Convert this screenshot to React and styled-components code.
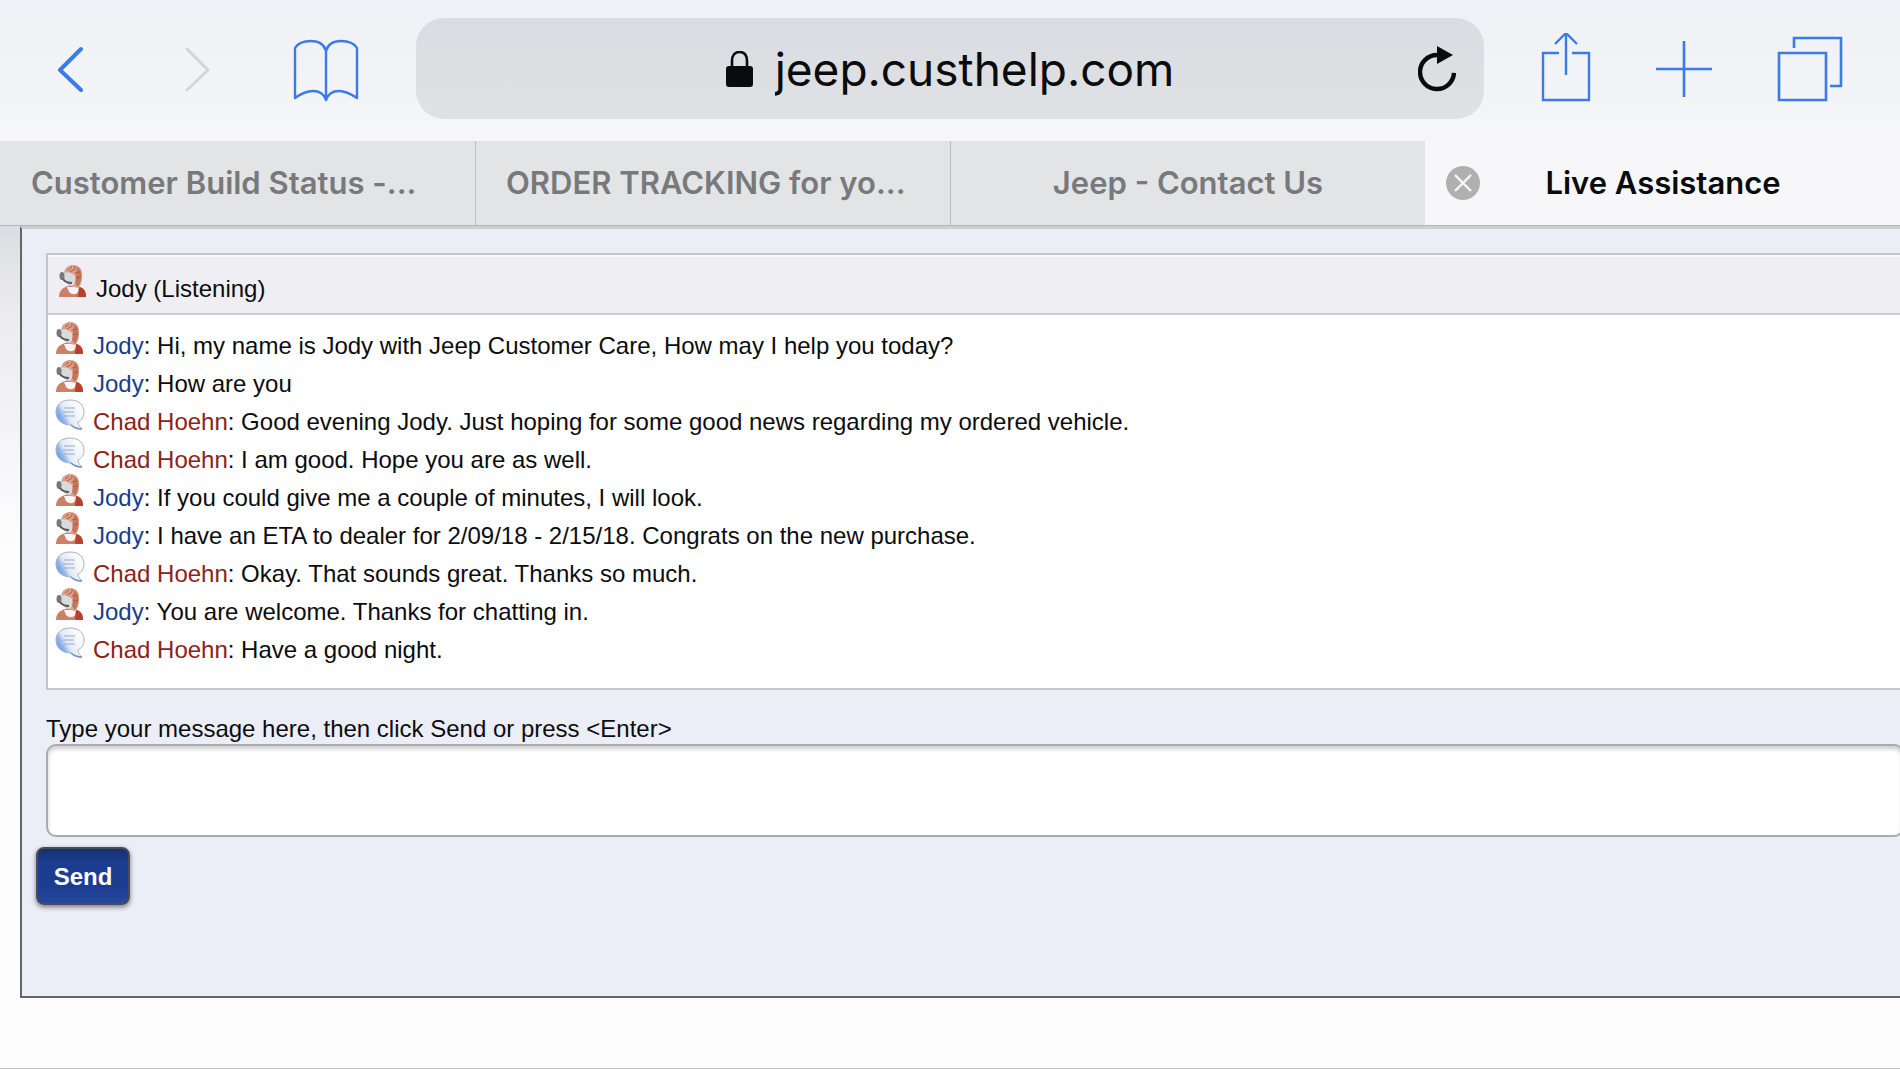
import React, { useState } from "react";
import styled, { createGlobalStyle } from "styled-components";

const GlobalStyle = createGlobalStyle`
  * {
    box-sizing: border-box;
  }
  body {
    margin: 0;
    overflow-x: hidden;
    background: #fdfdfe;
  }
`;

const Browser = styled.div`
  min-height: 100vh;
  display: flex;
  flex-direction: column;
  overflow: hidden;
  border-bottom: 1px solid #c3c4c6;
`;

const Toolbar = styled.header`
  display: flex;
  align-items: center;
  gap: 57px;
  padding: 18px 57px 22px 37px;
  background: linear-gradient(to bottom, #eff1f6 0%, #f1f3f6 50%, #f6f6f8 100%);
`;

const NavGroup = styled.nav`
  display: flex;
  align-items: center;
  gap: ${({ $gap }) => $gap};
`;

const IconButton = styled.button`
  display: flex;
  justify-content: center;
  align-items: center;
  width: ${({ $width }) => $width || "66px"};
  height: 72px;
  padding: 0;
  border: none;
  background: none;
  color: ${({ disabled }) => (disabled ? "#d3d5d8" : "#3b7be8")};
  cursor: pointer;
`;

const AddressBar = styled.div`
  flex: 1;
  display: grid;
  grid-template-columns: 1fr auto 1fr;
  align-items: center;
  height: 101px;
  padding: 0 28px;
  border-radius: 28px;
  background: linear-gradient(to bottom, #d9dce1, #e0e1e4);
`;

const Address = styled.div`
  grid-column: 2;
  display: flex;
  align-items: center;
  gap: 22px;
`;

const AddressInput = styled.input`
  field-sizing: content;
  height: 60px;
  padding: 0;
  border: none;
  outline: none;
  background: none;
  color: #0a0b0d;
  font-family: Inter, sans-serif;
  font-size: 46px;
`;

const ReloadButton = styled(IconButton)`
  justify-self: end;
  color: #0a0b0d;
`;

const TabStrip = styled.div`
  display: grid;
  grid-template-columns: repeat(4, 1fr);
  height: 85px;
  border-bottom: 1px solid #b5b7ba;
  background: #e3e4e6;
`;

const Tab = styled.div`
  min-width: 0;
  display: grid;
  grid-template-columns: ${({ $active }) => ($active ? "34px 1fr 34px" : "1fr")};
  align-items: center;
  padding: 0 ${({ $active }) => ($active ? "20px" : "30px")};
  border-left: 1px solid ${({ $active }) => ($active ? "#f7f7f9" : "#bcbec1")};
  background: ${({ $active }) => ($active ? "#f7f7f9" : "none")};

  &:first-child {
    border-left-color: transparent;
  }
`;

const TabTitle = styled.button`
  padding: 0;
  border: none;
  background: none;
  overflow: hidden;
  white-space: nowrap;
  text-align: ${({ $cut }) => ($cut ? "left" : "center")};
  color: ${({ $active }) => ($active ? "#0a0b0d" : "#77797c")};
  font-family: Inter, sans-serif;
  font-size: 31px;
  font-weight: 600;
  line-height: 40px;
  cursor: pointer;
`;

const CloseButton = styled.button`
  display: flex;
  width: 34px;
  height: 34px;
  padding: 0;
  border: none;
  background: none;
  cursor: pointer;
`;

const Page = styled.main`
  flex: 1;
  padding-left: 20px;
  background: linear-gradient(to bottom, #dcdde2 0, #ececf0 90px, #fdfdfe 320px);
  background-size: 20px 100%;
  background-repeat: no-repeat;
  font-family: "Liberation Sans", Arial, sans-serif;
  font-size: 24px;
  line-height: 30px;
  color: #0c0c0e;
`;

const ChatPanel = styled.form`
  padding: 24px 0 91px 14px;
  border: 2px solid #62666b;
  border-top: 3px solid #cdcfd2;
  border-right: none;
  background: #ebeef6;
`;

const Conversation = styled.section`
  margin-left: 10px;
  border: 2px solid #c3c5c9;
  border-right: none;
  background: #fff;
`;

const AgentStatus = styled.div`
  display: flex;
  align-items: baseline;
  gap: 8px;
  height: 60px;
  padding: 8px 10px 0;
  border-top: 2px solid #fbfbfd;
  border-bottom: 2px solid #cbccd0;
  background: #eeeef3;
`;

const MessageList = styled.ul`
  margin: 0;
  padding: 7px 7px 24px;
  list-style: none;
`;

const Message = styled.li`
  display: flex;
  align-items: baseline;
  gap: 8px;
  height: 38px;
`;

const Author = styled.span`
  color: ${({ $agent }) => ($agent ? "#193d8b" : "#8e2219")};
`;

const Field = styled.div`
  display: flex;
  flex-direction: column;
  margin: 24px -4px 0 10px;
`;

const MessageInput = styled.textarea`
  display: block;
  height: 93px;
  padding: 12px;
  border: 2px solid #a9abb0;
  border-radius: 10px;
  outline: none;
  resize: none;
  background: #fff;
  box-shadow: inset 0 3px 4px rgba(0, 0, 0, 0.2);
  font: inherit;
`;

const SendButton = styled.button`
  display: block;
  width: 94px;
  height: 58px;
  margin-top: 10px;
  padding: 2px 0 0;
  border: 2px solid #4a4d55;
  border-radius: 8px;
  background: linear-gradient(to bottom, #17306f 0%, #1c3d8f 24%, #1c3d8f 70%, #2547a0 100%);
  box-shadow: 0 2px 5px rgba(0, 0, 0, 0.5);
  color: #fff;
  font-family: inherit;
  font-size: 24px;
  font-weight: bold;
  cursor: pointer;
`;

const AgentIcon = () => (
  <svg width="30" height="32" viewBox="0 0 30 32" aria-hidden="true">
    <path d="M1 32 C1 26 4 23 10 21 L20 21 C25 23 28 25 28 32 Z" fill="#cb8067" />
    <path d="M21 22 C26 23 28 26 28 32 L20 32 Z" fill="#b9402f" />
    <path d="M9 22 L21 22 L20 27 C18 30 14 30 11 27 Z" fill="#fbf6f4" />
    <path d="M6 8 C7 2 11 0 15 0 C21 0 25 4 24 11 C24 17 23 20 20 23 L12 21 C8 18 5 13 6 8 Z" fill="#d9a18a" />
    <path d="M19 2 C24 5 24 12 22 18 L20 22 L17 18 L18 10 Z" fill="#c4765c" />
    <path d="M6 8 C9 6 14 8 17 11 C18 16 17 20 14 21 C9 19 5 14 6 8 Z" fill="#d8dadb" />
    <path d="M10 5 L14 2 M12 7 L17 4 V1 M17 8 L22 7 M18 13 L23 12" fill="none" stroke="#b3583f" strokeWidth="1" />
    <ellipse cx="4" cy="11" rx="2.500" ry="4" fill="#77787a" />
    <path d="M5 14 C7 17 10 18 14 18" fill="none" stroke="#55585a" strokeWidth="2" />
  </svg>
);

const BubbleIcon = () => (
  <svg width="30" height="32" viewBox="0 0 30 32" aria-hidden="true">
    <defs>
      <linearGradient id="bubble" x1="0" y1="0.75" x2="0.8" y2="0.3">
        <stop offset="0" stopColor="#5b90e2" />
        <stop offset="0.3" stopColor="#8fb4ec" />
        <stop offset="0.5" stopColor="#e3eaf5" />
        <stop offset="1" stopColor="#fafafb" />
      </linearGradient>
    </defs>
    <path
      d="M15 2 C24 2 29 7 29 14 C29 19 27 22 23 24 C23 27 25 29 27 31 C22 31 18 29 16 27 C6 27 1 21 1 14 C1 7 6 2 15 2 Z"
      fill="url(#bubble)"
      stroke="#a9b1bd"
      strokeWidth="1"
    />
    <path d="M9 10 H20 M8 14 H19 M9 18 H20" stroke="#9aa9c6" strokeWidth="1" />
    <path d="M16 27 C18 29 22 31 27 31" fill="none" stroke="#6f8fc4" strokeWidth="1.500" />
  </svg>
);

const tabs = [
  { title: "Customer Build Status -...", cut: true },
  { title: "ORDER TRACKING for yo...", cut: true },
  { title: "Jeep - Contact Us" },
  { title: "Live Assistance", active: true },
];

const messages = [
  { author: "Jody", agent: true, text: "Hi, my name is Jody with Jeep Customer Care, How may I help you today?" },
  { author: "Jody", agent: true, text: "How are you" },
  { author: "Chad Hoehn", text: "Good evening Jody. Just hoping for some good news regarding my ordered vehicle." },
  { author: "Chad Hoehn", text: "I am good. Hope you are as well." },
  { author: "Jody", agent: true, text: "If you could give me a couple of minutes, I will look." },
  { author: "Jody", agent: true, text: "I have an ETA to dealer for 2/09/18 - 2/15/18. Congrats on the new purchase." },
  { author: "Chad Hoehn", text: "Okay. That sounds great. Thanks so much." },
  { author: "Jody", agent: true, text: "You are welcome. Thanks for chatting in." },
  { author: "Chad Hoehn", text: "Have a good night." },
];

export default function App() {
  const [url, setUrl] = useState("jeep.custhelp.com");
  const [log, setLog] = useState(messages);
  const [draft, setDraft] = useState("");

  const sendHandler = (e) => {
    e.preventDefault();
    if (!draft.trim()) return;
    setLog([...log, { author: "Chad Hoehn", text: draft }]);
    setDraft("");
  };

  const keyHandler = (e) => {
    if (e.key === "Enter") sendHandler(e);
  };

  return (
    <Browser>
      <GlobalStyle />
      <Toolbar>
        <NavGroup $gap="62px">
          <IconButton aria-label="Back">
            <svg width="26" height="46" viewBox="0 0 26 46" fill="none" stroke="currentColor" strokeWidth="4" strokeLinecap="round" strokeLinejoin="round">
              <path d="M24 3 L3 24 L24 44" />
            </svg>
          </IconButton>
          <IconButton aria-label="Forward" disabled>
            <svg width="26" height="46" viewBox="0 0 26 46" fill="none" stroke="currentColor" strokeWidth="3" strokeLinecap="round" strokeLinejoin="round">
              <path d="M2 3 L23 24 L2 44" />
            </svg>
          </IconButton>
          <IconButton aria-label="Bookmarks">
            <svg width="66" height="66" viewBox="0 0 66 66" fill="none" stroke="currentColor" strokeWidth="2.400" strokeLinejoin="round">
              <path d="M33 15 C31 8 25 5 18 5 C12 5 5 7 2 12 V62 C9 57 15 55 20 55 C27 55 31 58 33 64 C35 58 39 55 46 55 C52 55 58 58 64 62 V12 C61 7 54 5 48 5 C41 5 35 8 33 15 V63" />
            </svg>
          </IconButton>
        </NavGroup>

        <AddressBar>
          <Address>
            <svg width="27" height="36" viewBox="0 0 27 36" aria-hidden="true">
              <path d="M6 16 V10 C6 4 9 1 13.500 1 C18 1 21 4 21 10 V16" fill="none" stroke="#0a0b0d" strokeWidth="2.600" />
              <rect x="0" y="15" width="27" height="21" rx="3" fill="#0a0b0d" />
            </svg>
            <AddressInput aria-label="Address" value={url} onChange={(e) => setUrl(e.target.value)} />
          </Address>
          <ReloadButton $width="38px" aria-label="Reload">
            <svg width="38" height="46" viewBox="0 0 38 46">
              <path d="M36 27 A17 17 0 1 1 19 9" fill="none" stroke="currentColor" strokeWidth="4.400" />
              <path d="M19 0 L35 9 L19 18 Z" fill="currentColor" />
            </svg>
          </ReloadButton>
        </AddressBar>

        <NavGroup $gap="65px">
          <IconButton $width="50px" aria-label="Share">
            <svg width="50" height="72" viewBox="0 0 50 72" fill="none" stroke="currentColor" strokeWidth="2.400">
              <path d="M18 20 H2 V67 H48 V20 H31" />
              <path d="M25 42 V0 M14 11 L25 0 L36 11" />
            </svg>
          </IconButton>
          <IconButton $width="56px" aria-label="New tab">
            <svg width="56" height="56" viewBox="0 0 56 56" stroke="currentColor" strokeWidth="2.600">
              <path d="M28 0 V56 M0 28 H56" />
            </svg>
          </IconButton>
          <IconButton aria-label="Show tabs">
            <svg width="66" height="66" viewBox="0 0 66 66" fill="none" stroke="currentColor" strokeWidth="2.600">
              <path d="M2 17 H49 V64 H2 Z" />
              <path d="M17 12 V2 H64 V50 H53" />
            </svg>
          </IconButton>
        </NavGroup>
      </Toolbar>

      <TabStrip>
        {tabs.map((tab) => (
          <Tab key={tab.title} $active={tab.active}>
            {tab.active && (
              <CloseButton aria-label="Close tab">
                <svg width="34" height="34" viewBox="0 0 34 34">
                  <circle cx="17" cy="17" r="17" fill="#b0b0b1" />
                  <path d="M9 9 L25 25 M25 9 L9 25" stroke="#f7f7f9" strokeWidth="2.400" />
                </svg>
              </CloseButton>
            )}
            <TabTitle $active={tab.active} $cut={tab.cut}>
              {tab.title}
            </TabTitle>
          </Tab>
        ))}
      </TabStrip>

      <Page>
        <ChatPanel onSubmit={sendHandler}>
          <Conversation>
            <AgentStatus>
              <AgentIcon />
              <span>Jody (Listening)</span>
            </AgentStatus>
            <MessageList>
              {log.map((val, i) => (
                <Message key={i}>
                  {val.agent ? <AgentIcon /> : <BubbleIcon />}
                  <span>
                    <Author $agent={val.agent}>{val.author}</Author>: {val.text}
                  </span>
                </Message>
              ))}
            </MessageList>
          </Conversation>
          <Field>
            <label htmlFor="message">Type your message here, then click Send or press &lt;Enter&gt;</label>
            <MessageInput id="message" value={draft} onChange={(e) => setDraft(e.target.value)} onKeyDown={keyHandler} />
          </Field>
          <SendButton type="submit">Send</SendButton>
        </ChatPanel>
      </Page>
    </Browser>
  );
}
